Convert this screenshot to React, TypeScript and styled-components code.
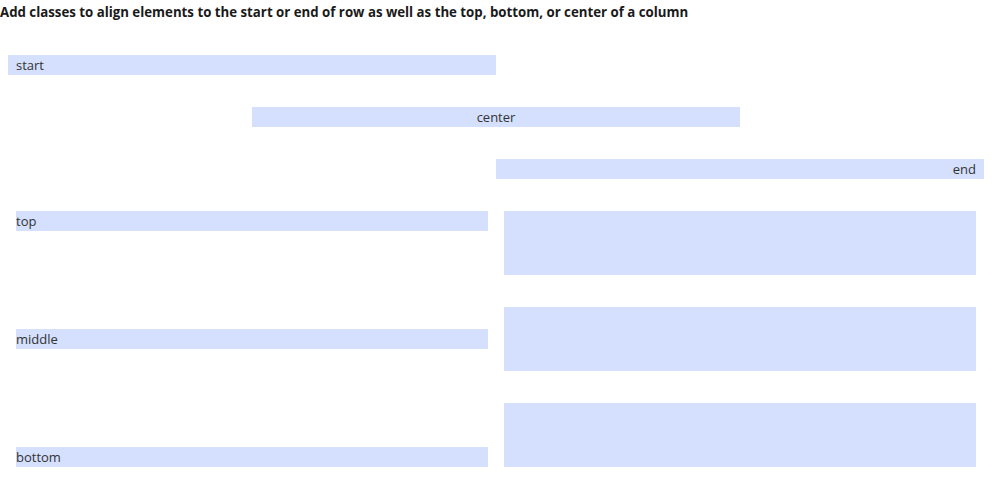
import React from "react";
import styled, { createGlobalStyle } from "styled-components";

const GlobalStyle = createGlobalStyle`
  body {
    margin: 0;
    background: #ffffff;
    font-family: "Open Sans", "Noto Sans", sans-serif;
    color: #333333;
  }
`;

const Page = styled.div`
  display: flex;
  flex-direction: column;
`;

const Heading = styled.h1`
  margin: 0;
  font-size: 13.25px;
  font-weight: 700;
  line-height: 25px;
  color: #1a1a1a;
`;

const Section = styled.div`
  display: flex;
  flex-direction: column;
  gap: 32px;
  padding: 30px 8px 0;
`;

const Row = styled.div<{ $justify: string }>`
  display: flex;
  justify-content: ${(p) => p.$justify};
`;

const AlignBox = styled.div<{ $text: string }>`
  width: 50%;
  padding: 0 8px;
  box-sizing: border-box;
  background: #d4e0fd;
  font-size: 13px;
  line-height: 20px;
  text-align: ${(p) => p.$text};
`;

const ColRow = styled.div<{ $align: string }>`
  display: flex;
  align-items: ${(p) => p.$align};
`;

const Col = styled.div`
  width: 50%;
  padding: 0 8px;
  box-sizing: border-box;
`;

const Label = styled.div`
  background: #d4e0fd;
  font-size: 13px;
  line-height: 20px;
`;

const Tall = styled.div`
  background: #d4e0fd;
  height: 64px;
`;

const hRows = [
  { label: "start", justify: "flex-start", text: "left" },
  { label: "center", justify: "center", text: "center" },
  { label: "end", justify: "flex-end", text: "right" },
];

const vRows = [
  { label: "top", align: "flex-start" },
  { label: "middle", align: "center" },
  { label: "bottom", align: "flex-end" },
];

const App = () => {
  return (
    <Page>
      <GlobalStyle />
      <Heading>
        Add classes to align elements to the start or end of row as well as the
        top, bottom, or center of a column
      </Heading>
      <Section>
        {hRows.map((r) => (
          <Row key={r.label} $justify={r.justify}>
            <AlignBox $text={r.text}>{r.label}</AlignBox>
          </Row>
        ))}
        {vRows.map((r) => (
          <ColRow key={r.label} $align={r.align}>
            <Col>
              <Label>{r.label}</Label>
            </Col>
            <Col>
              <Tall />
            </Col>
          </ColRow>
        ))}
      </Section>
    </Page>
  );
};

export default App;
